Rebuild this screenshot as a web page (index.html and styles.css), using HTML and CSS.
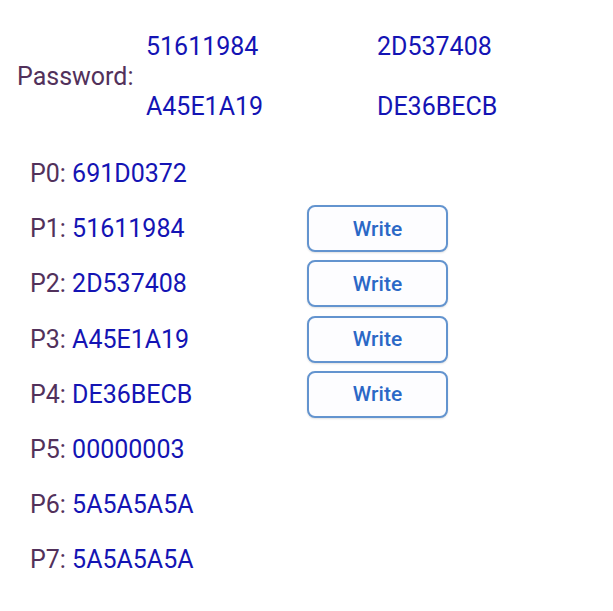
FILE: index.html
```html
<!DOCTYPE html>
<html lang="en">
  <head>
    <meta charset="UTF-8" />
    <meta name="viewport" content="width=device-width, initial-scale=1.0" />
    <title>Tag Pages</title>
    <link rel="stylesheet" href="styles.css">
  </head>
  <body>
    <div class="password">
      <div class="password-label">Password:</div>
      <div class="password-grid">
        <span class="value">51611984</span>
        <span class="value">2D537408</span>
        <span class="value">A45E1A19</span>
        <span class="value">DE36BECB</span>
      </div>
    </div>

    <div class="pages">
      <div class="page-row">
        <div class="page-text"><span class="label">P0: </span><span class="value">691D0372</span></div>
      </div>
      <div class="page-row">
        <div class="page-text"><span class="label">P1: </span><span class="value">51611984</span></div>
        <button type="button" class="write-btn">Write</button>
      </div>
      <div class="page-row">
        <div class="page-text"><span class="label">P2: </span><span class="value">2D537408</span></div>
        <button type="button" class="write-btn">Write</button>
      </div>
      <div class="page-row">
        <div class="page-text"><span class="label">P3: </span><span class="value">A45E1A19</span></div>
        <button type="button" class="write-btn">Write</button>
      </div>
      <div class="page-row">
        <div class="page-text"><span class="label">P4: </span><span class="value">DE36BECB</span></div>
        <button type="button" class="write-btn">Write</button>
      </div>
      <div class="page-row">
        <div class="page-text"><span class="label">P5: </span><span class="value">00000003</span></div>
      </div>
      <div class="page-row">
        <div class="page-text"><span class="label">P6: </span><span class="value">5A5A5A5A</span></div>
      </div>
      <div class="page-row">
        <div class="page-text"><span class="label">P7: </span><span class="value">5A5A5A5A</span></div>
      </div>
    </div>
  </body>
</html>
```

FILE: styles.css
```css
body {
  margin: 0;
  background: #fff;
  font-family: Roboto, "Liberation Sans", sans-serif;
  font-size: 25px;
}
.label,
.password-label {
  color: #52315b;
}
.value {
  color: #1414b4;
}
.password {
  display: flex;
  align-items: center;
  padding-top: 16px;
}
.password-label {
  width: 129px;
  padding-left: 17px;
}
.password-grid {
  display: grid;
  grid-template-columns: 231px 231px;
  grid-auto-rows: 60px;
  align-items: center;
}
.pages {
  margin-top: 10px;
}
.page-row {
  display: flex;
  align-items: center;
  height: 55.2px;
  padding-left: 30px;
}
.page-text {
  width: 277px;
}
.write-btn {
  width: 141px;
  height: 47px;
  padding: 0;
  background: #fdfdff;
  border: 2px solid #6394cf;
  border-radius: 8px;
  box-shadow: 0 1px 2px rgba(0, 0, 0, 0.12);
  color: #2b68c6;
  font-family: Roboto, "Liberation Sans", sans-serif;
  font-size: 21px;
  font-weight: 500;
  cursor: pointer;
}
```
